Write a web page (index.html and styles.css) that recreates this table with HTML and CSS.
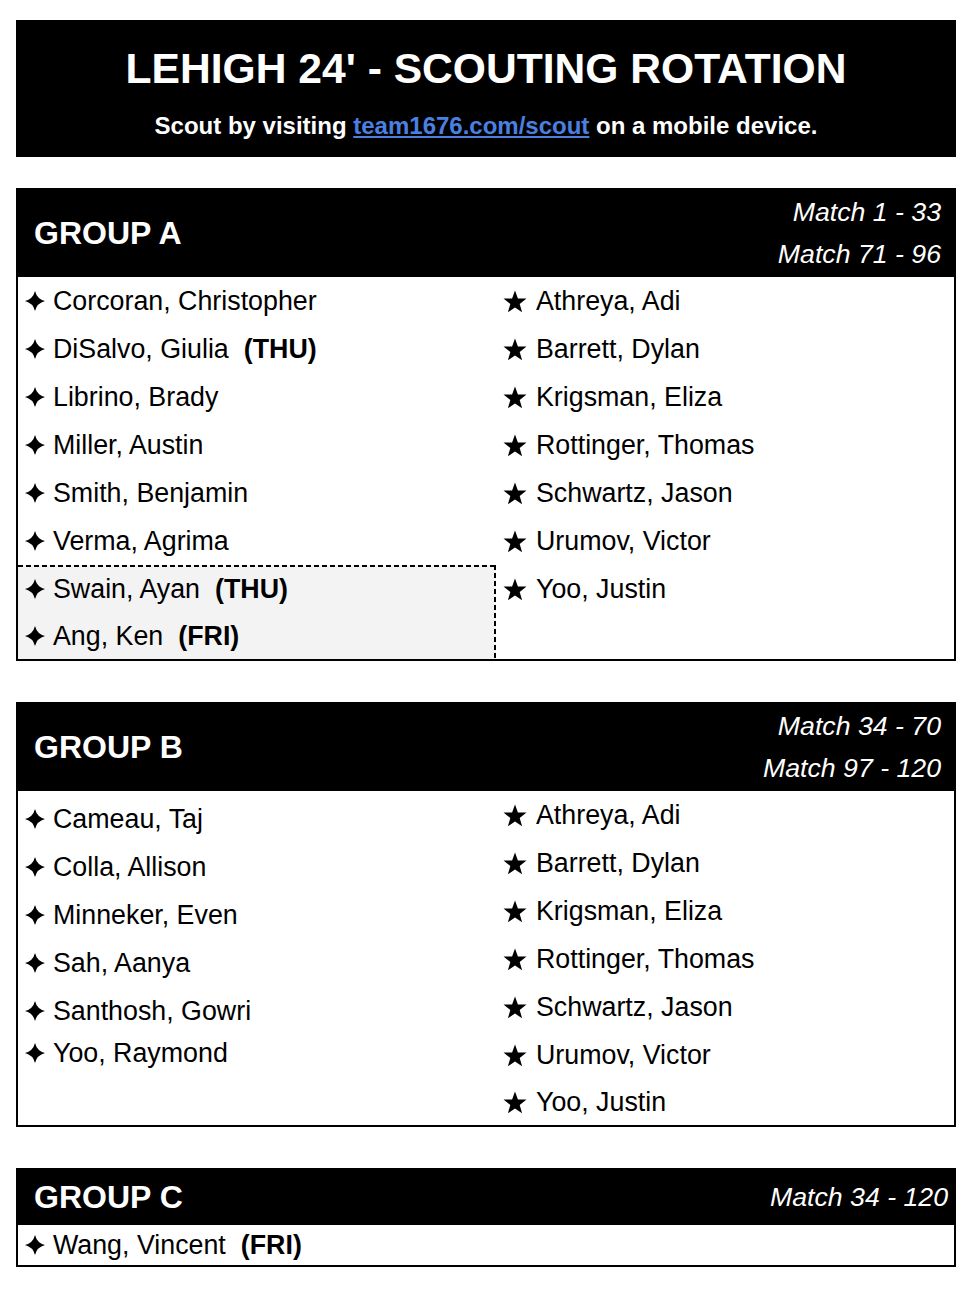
FILE: index.html
```html
<!DOCTYPE html>
<html lang="en">
<head>
<meta charset="utf-8">
<title>Lehigh 24' - Scouting Rotation</title>
<link rel="stylesheet" href="styles.css">
</head>
<body>
<svg class="defs" width="0" height="0" aria-hidden="true">
  <defs>
    <symbol id="spark" viewBox="0 0 20 20"><path d="M10 0 Q12 8 20 10 Q12 12 10 20 Q8 12 0 10 Q8 8 10 0Z"/></symbol>
    <symbol id="star" viewBox="0 0 24 23"><polygon points="12,0.5 14.9,8.4 23.5,8.6 16.7,13.9 19.1,22.3 12,17.4 4.9,22.3 7.3,13.9 0.5,8.6 9.1,8.4"/></symbol>
  </defs>
</svg>
<main class="page">
  <header class="banner">
    <h1 class="banner-title">LEHIGH 24' - SCOUTING ROTATION</h1>
    <p class="banner-sub">Scout by visiting <a class="banner-link" href="#">team1676.com/scout</a> on a mobile device.</p>
  </header>

  <section class="group group-a">
    <div class="group-head">
      <h2 class="group-title">GROUP A</h2>
      <div class="ranges"><span class="range">Match 1 - 33</span><span class="range">Match 71 - 96</span></div>
    </div>
    <div class="group-body">
      <div class="col col-left">
        <div class="row"><svg class="ico spark"><use href="#spark"/></svg><span>Corcoran, Christopher</span></div>
        <div class="row"><svg class="ico spark"><use href="#spark"/></svg><span>DiSalvo, Giulia</span><b class="day">(THU)</b></div>
        <div class="row"><svg class="ico spark"><use href="#spark"/></svg><span>Librino, Brady</span></div>
        <div class="row"><svg class="ico spark"><use href="#spark"/></svg><span>Miller, Austin</span></div>
        <div class="row"><svg class="ico spark"><use href="#spark"/></svg><span>Smith, Benjamin</span></div>
        <div class="row"><svg class="ico spark"><use href="#spark"/></svg><span>Verma, Agrima</span></div>
        <div class="highlight">
          <div class="row"><svg class="ico spark"><use href="#spark"/></svg><span>Swain, Ayan</span><b class="day">(THU)</b></div>
          <div class="row row-end"><svg class="ico spark"><use href="#spark"/></svg><span>Ang, Ken</span><b class="day">(FRI)</b></div>
        </div>
      </div>
      <div class="col col-right">
        <div class="row"><svg class="ico star"><use href="#star"/></svg><span>Athreya, Adi</span></div>
        <div class="row"><svg class="ico star"><use href="#star"/></svg><span>Barrett, Dylan</span></div>
        <div class="row"><svg class="ico star"><use href="#star"/></svg><span>Krigsman, Eliza</span></div>
        <div class="row"><svg class="ico star"><use href="#star"/></svg><span>Rottinger, Thomas</span></div>
        <div class="row"><svg class="ico star"><use href="#star"/></svg><span>Schwartz, Jason</span></div>
        <div class="row"><svg class="ico star"><use href="#star"/></svg><span>Urumov, Victor</span></div>
        <div class="row"><svg class="ico star"><use href="#star"/></svg><span>Yoo, Justin</span></div>
      </div>
    </div>
  </section>

  <section class="group group-b">
    <div class="group-head">
      <h2 class="group-title">GROUP B</h2>
      <div class="ranges"><span class="range">Match 34 - 70</span><span class="range">Match 97 - 120</span></div>
    </div>
    <div class="group-body">
      <div class="col col-left col-shift">
        <div class="row"><svg class="ico spark"><use href="#spark"/></svg><span>Cameau, Taj</span></div>
        <div class="row"><svg class="ico spark"><use href="#spark"/></svg><span>Colla, Allison</span></div>
        <div class="row"><svg class="ico spark"><use href="#spark"/></svg><span>Minneker, Even</span></div>
        <div class="row"><svg class="ico spark"><use href="#spark"/></svg><span>Sah, Aanya</span></div>
        <div class="row"><svg class="ico spark"><use href="#spark"/></svg><span>Santhosh, Gowri</span></div>
        <div class="row row-short"><svg class="ico spark"><use href="#spark"/></svg><span>Yoo, Raymond</span></div>
      </div>
      <div class="col col-right">
        <div class="row"><svg class="ico star"><use href="#star"/></svg><span>Athreya, Adi</span></div>
        <div class="row"><svg class="ico star"><use href="#star"/></svg><span>Barrett, Dylan</span></div>
        <div class="row"><svg class="ico star"><use href="#star"/></svg><span>Krigsman, Eliza</span></div>
        <div class="row"><svg class="ico star"><use href="#star"/></svg><span>Rottinger, Thomas</span></div>
        <div class="row"><svg class="ico star"><use href="#star"/></svg><span>Schwartz, Jason</span></div>
        <div class="row"><svg class="ico star"><use href="#star"/></svg><span>Urumov, Victor</span></div>
        <div class="row row-end"><svg class="ico star"><use href="#star"/></svg><span>Yoo, Justin</span></div>
      </div>
    </div>
  </section>

  <section class="group group-c">
    <div class="group-head group-head-slim">
      <h2 class="group-title">GROUP C</h2>
      <div class="ranges"><span class="range">Match 34 - 120</span></div>
    </div>
    <div class="group-body group-body-single">
      <div class="row row-slim"><svg class="ico spark"><use href="#spark"/></svg><span>Wang, Vincent</span><b class="day">(FRI)</b></div>
    </div>
  </section>
</main>
</body>
</html>
```

FILE: styles.css
```css
* { box-sizing: border-box; }

html, body {
  margin: 0;
  padding: 0;
  background: #fff;
}

body {
  font-family: "Liberation Sans", Arial, Helvetica, sans-serif;
  color: #000;
}

.defs {
  position: absolute;
  width: 0;
  height: 0;
  overflow: hidden;
}

.page {
  width: 972px;
  padding: 20px 16px 0;
  display: flex;
  flex-direction: column;
}

.banner {
  background: #000;
  color: #fff;
  height: 137px;
  padding-top: 24px;
  text-align: center;
}

.banner-title {
  margin: 0;
  font-size: 42.6px;
  line-height: 48px;
  font-weight: 700;
}

.banner-sub {
  margin: 20px 0 0;
  font-size: 24px;
  line-height: 28px;
  font-weight: 700;
}

.banner-link {
  color: #4a80e0;
  text-decoration: underline;
  text-decoration-thickness: 2px;
  text-underline-offset: 2px;
}

.group {
  border: 2px solid #000;
  margin-top: 41px;
}

.group-a { margin-top: 31px; }

.group-head {
  background: #000;
  color: #fff;
  height: 89px;
  margin: -2px -2px 0;
  padding: 0 15px 0 18px;
  display: flex;
  align-items: center;
  justify-content: space-between;
}

.group-head-slim {
  height: 57px;
  padding-right: 8px;
}

.group-title {
  margin: 0;
  font-size: 32px;
  line-height: 36px;
  font-weight: 700;
}

.ranges {
  display: flex;
  flex-direction: column;
  align-items: flex-end;
  margin-top: 1px;
}

.range {
  font-size: 26.7px;
  line-height: 42px;
  font-style: italic;
}

.group-body {
  display: grid;
  grid-template-columns: 478px 1fr;
  font-size: 26.8px;
}

.group-body-single {
  display: block;
}

.col-shift {
  padding-top: 4px;
}

.row {
  height: 48px;
  display: flex;
  align-items: center;
  padding-left: 7px;
  white-space: nowrap;
}

.row-end { height: 46px; }

.row-short { height: 36px; }

.row-slim { height: 40px; }

.ico {
  flex: none;
  fill: #000;
}

.spark {
  width: 20px;
  height: 20px;
  margin-right: 8px;
}

.star {
  width: 24px;
  height: 23px;
  margin-right: 9px;
}

.day {
  font-weight: 700;
  margin-left: 15px;
}

.highlight {
  background:
    repeating-linear-gradient(to right, #000 0 5px, transparent 5px 8px) top left / 100% 2px no-repeat,
    repeating-linear-gradient(to bottom, #000 0 5px, transparent 5px 8px) top right / 2px 100% no-repeat,
    #f3f3f3;
}
```
